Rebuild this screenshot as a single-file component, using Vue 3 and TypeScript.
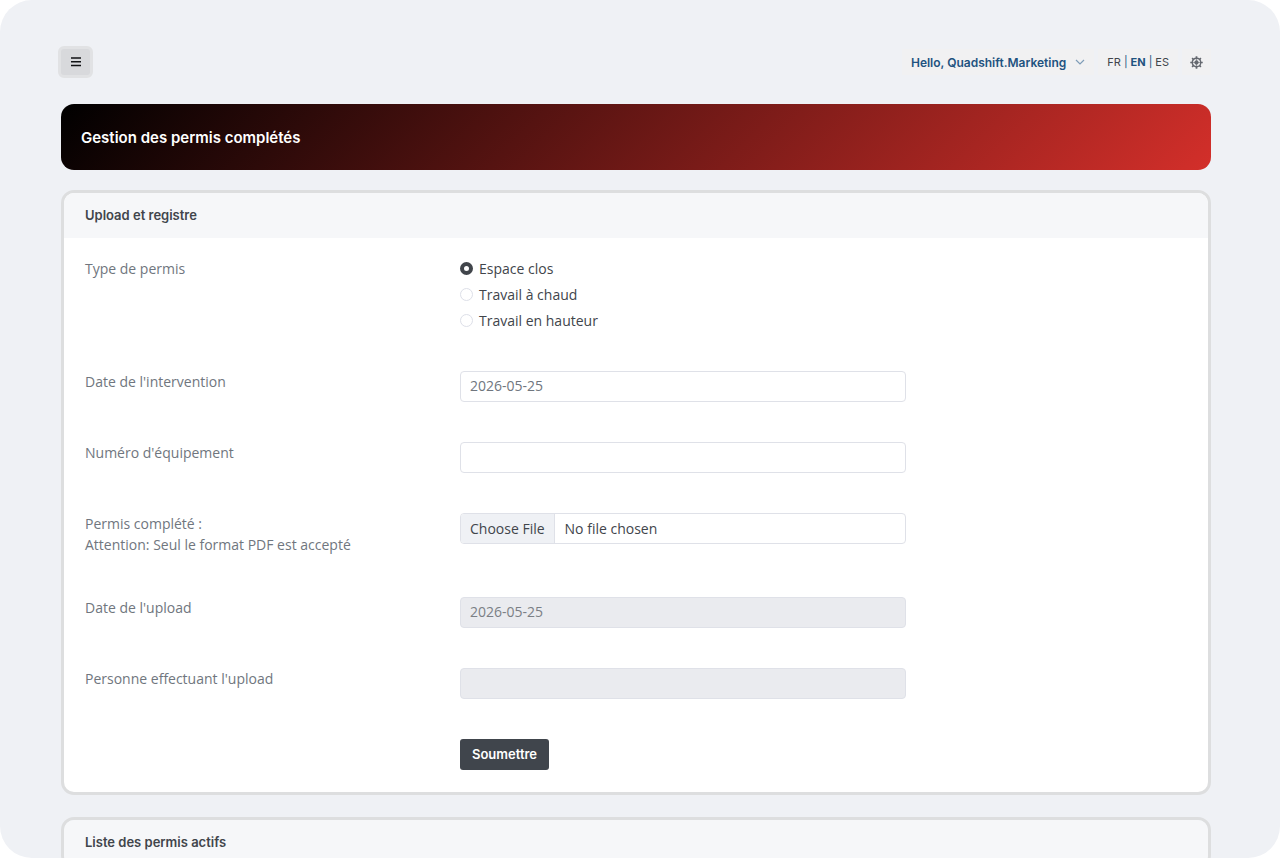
<script setup lang="ts">
import { ref } from 'vue'

interface PermitType {
  value: string
  label: string
}

const permitTypes: PermitType[] = [
  { value: 'confined', label: 'Espace clos' },
  { value: 'hot', label: 'Travail à chaud' },
  { value: 'height', label: 'Travail en hauteur' },
]

const selected = ref('confined')
const workDate = ref('2026-05-25')
const equipment = ref('')
const uploadDate = ref('2026-05-25')
const uploader = ref('')
</script>

<template>
  <div class="page">
    <header class="topbar">
      <button class="menu" type="button" aria-label="Menu">
        <svg width="10" height="10" viewBox="0 0 10 10" aria-hidden="true">
          <path d="M0 1h10M0 4.800h10M0 8.600h10" stroke="currentColor" stroke-width="1.5" />
        </svg>
      </button>
      <nav class="tools">
        <button class="user" type="button">
          Hello, Quadshift.Marketing
          <svg width="10" height="6" viewBox="0 0 10 6" aria-hidden="true">
            <path d="M1 1l4 4 4-4" fill="none" stroke="#7f9db8" stroke-width="1.2" />
          </svg>
        </button>
        <div class="langs">
          <a href="#fr">FR</a><span>|</span><a href="#en" class="current">EN</a><span>|</span><a href="#es">ES</a>
        </div>
        <button class="gear" type="button" aria-label="Settings">
          <svg width="13" height="13" viewBox="0 0 26 26" fill="none" stroke="currentColor" aria-hidden="true">
            <circle cx="13" cy="13" r="8.5" stroke-width="2.8" />
            <circle cx="13" cy="13" r="3" fill="currentColor" stroke-width="2.6" />
            <path
              d="M13 .5v4M13 21.500v4M.5 13h4M21.500 13h4M4.200 4.200l2.600 2.600M19.200 19.200l2.600 2.600M4.200 21.800l2.600-2.600M19.200 6.800l2.600-2.600"
              stroke-width="3.4"
            />
            <path d="M13 5v5M13 16v5M5 13h5M16 13h5" stroke-width="1.2" />
          </svg>
        </button>
      </nav>
    </header>

    <main class="content">
      <div class="banner"><h1>Gestion des permis complétés</h1></div>

      <section class="card">
        <h2>Upload et registre</h2>
        <form class="form" @submit.prevent>
          <div class="row" role="radiogroup" aria-labelledby="type-label">
            <span id="type-label" class="label">Type de permis</span>
            <div class="field radios">
              <label v-for="t in permitTypes" :key="t.value" class="radio">
                <input v-model="selected" type="radio" name="permit" :value="t.value" />
                {{ t.label }}
              </label>
            </div>
          </div>
          <div class="row">
            <label class="label" for="work-date">Date de l'intervention</label>
            <input id="work-date" v-model="workDate" class="field control" type="text" />
          </div>
          <div class="row">
            <label class="label" for="equipment">Numéro d'équipement</label>
            <input id="equipment" v-model="equipment" class="field control" type="text" />
          </div>
          <div class="row">
            <label class="label tall" for="file">Permis complété :<br />Attention: Seul le format PDF est accepté</label>
            <input id="file" class="field control file" type="file" accept=".pdf" />
          </div>
          <div class="row">
            <label class="label" for="upload-date">Date de l'upload</label>
            <input id="upload-date" v-model="uploadDate" class="field control" type="text" disabled />
          </div>
          <div class="row">
            <label class="label" for="uploader">Personne effectuant l'upload</label>
            <input id="uploader" v-model="uploader" class="field control" type="text" disabled />
          </div>
          <div class="row">
            <button class="field submit" type="submit">Soumettre</button>
          </div>
        </form>
      </section>

      <section class="card list">
        <h2>Liste des permis actifs</h2>
      </section>
    </main>
  </div>
</template>

<style>
body {
  margin: 0;
  background: #fff;
}
</style>

<style scoped>
.page {
  box-sizing: border-box;
  height: 100vh;
  overflow: hidden;
  padding: 46px 69px 0 58px;
  border-radius: 32px;
  background: #eff1f5;
  color: #41454b;
  font: 14px/21px "Open Sans", Inter, sans-serif;
}
.page * {
  box-sizing: border-box;
}
button,
input {
  font: inherit;
  color: inherit;
}
.topbar {
  display: flex;
  justify-content: space-between;
  align-items: center;
}
.menu {
  display: flex;
  align-items: center;
  justify-content: center;
  width: 35px;
  height: 32px;
  padding: 0;
  border: 3px solid #e1e2e4;
  border-radius: 6px;
  background: #d8d9dc;
  color: #101214;
}
.tools {
  display: flex;
  gap: 4px;
  font-family: Inter, sans-serif;
  font-size: 11px;
}
.user,
.langs,
.gear {
  display: flex;
  align-items: center;
  height: 26px;
  border: 0;
  background: #f1f1f2;
}
.user {
  gap: 9px;
  padding: 0 9px;
  color: #1f5380;
  font-size: 12px;
  font-weight: 600;
}
.langs {
  gap: 3px;
  padding: 0 9px;
}
.langs a {
  color: #41454b;
  text-decoration: none;
}
.langs span,
.langs .current {
  color: #1f5380;
}
.langs .current {
  font-weight: 700;
}
.gear {
  padding: 0 8px;
  color: #656970;
}
.content {
  margin-left: 3px;
}
.banner {
  display: flex;
  align-items: center;
  height: 66px;
  margin-top: 26px;
  padding: 0 20px;
  border-radius: 13px;
  background: linear-gradient(135deg, #000, #d32f2a);
}
h1,
h2 {
  margin: 0;
  font-family: Inter, sans-serif;
  font-weight: 600;
}
h1 {
  color: #fff;
  font-size: 15px;
}
.card {
  margin-top: 20px;
  overflow: hidden;
  border: 3px solid #dddedf;
  border-radius: 13px;
  background: #fff;
}
.list {
  margin-top: 22px;
}
h2 {
  padding: 12px 21px;
  background: #f6f7f9;
  font-size: 13px;
}
.form {
  display: flex;
  flex-direction: column;
  gap: 40px;
  padding: 20px 21px 22px;
}
.row {
  display: grid;
  grid-template-columns: repeat(12, minmax(0, 1fr));
  column-gap: 23px;
  align-items: start;
}
.label {
  grid-column: 1 / span 4;
  color: #70767e;
}
.tall {
  padding-bottom: 2px;
}
.field {
  grid-column: 5 / span 5;
}
.radios {
  display: flex;
  flex-direction: column;
  gap: 5px;
}
.radio {
  display: flex;
  align-items: center;
  gap: 6px;
}
.radio input {
  appearance: none;
  width: 13px;
  height: 13px;
  margin: 0;
  border: 1px solid #dddfe8;
  border-radius: 50%;
  background: #fff;
}
.radio input:checked {
  border: 4px solid #41454b;
}
.control {
  width: 100%;
  height: 31px;
  padding: 3px 9px 5px;
  border: 1px solid #dfe1e8;
  border-radius: 4px;
  background: #fff;
  color: #70767e;
}
.control:disabled {
  background: #eaebef;
  color: #7b7f85;
}
.file {
  overflow: hidden;
  padding: 4px 9px;
  color: #41454b;
}
.file::file-selector-button {
  height: 29px;
  margin: -4px 10px -4px -9px;
  padding: 4px 9px;
  border: 0 solid #dfe1e8;
  border-right-width: 1px;
  background: #eff1f5;
  color: #41454b;
  font: inherit;
}
.submit {
  justify-self: start;
  height: 31px;
  padding: 0 12px;
  border: 0;
  border-radius: 3px;
  background: #40454c;
  color: #fff;
  font-family: Inter, sans-serif;
  font-size: 13px;
  font-weight: 600;
}
</style>
